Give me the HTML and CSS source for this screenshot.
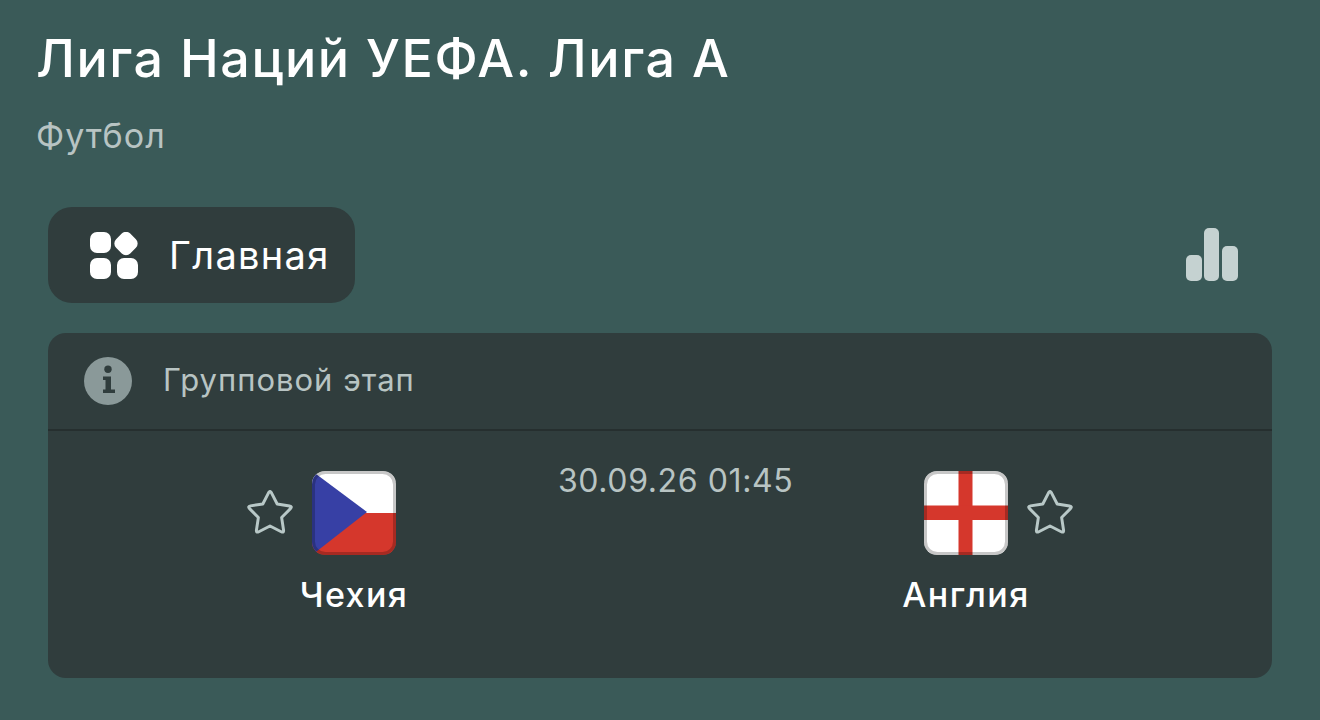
FILE: index.html
```html
<!DOCTYPE html>
<html lang="ru">
<head>
    <meta charset="UTF-8">
    <title>Лига Наций УЕФА. Лига А</title>
    <link rel="stylesheet" href="styles.css">
</head>
<body>
    <header class="header">
        <h1>Лига Наций УЕФА. Лига А</h1>
        <div class="sport">Футбол</div>
    </header>

    <div class="content">
        <div class="tabs">
            <div class="tab">
                <svg class="tab-icon" width="48" height="47" viewBox="0 0 48 47">
                    <rect x="0" y="0" width="21" height="21" rx="7" fill="#fff"/>
                    <rect x="26" y="1.500" width="20" height="20" rx="6" fill="#fff" transform="rotate(45 36 11.500)"/>
                    <rect x="0" y="26" width="21" height="21" rx="7" fill="#fff"/>
                    <rect x="27" y="26" width="21" height="21" rx="7" fill="#fff"/>
                </svg>
                <span>Главная</span>
            </div>
            <svg class="stats-icon" width="52" height="53" viewBox="0 0 52 53">
                <rect x="0" y="27" width="16" height="26" rx="5" fill="#c5d2d1"/>
                <rect x="18" y="0" width="15" height="53" rx="5" fill="#c5d2d1"/>
                <rect x="36" y="18" width="16" height="35" rx="5" fill="#c5d2d1"/>
            </svg>
        </div>

        <section class="card">
            <div class="card-head">
                <svg width="48" height="48" viewBox="0 0 48 48">
                    <circle cx="24" cy="24" r="24" fill="#8a9999"/>
                    <circle cx="24" cy="12.300" r="3.700" fill="#303d3d"/>
                    <path d="M19 19.500h8v13h4v3.500h-12v-3.500h2.500v-9.500h-2.500z" fill="#303d3d"/>
                </svg>
                <span class="stage">Групповой этап</span>
            </div>
            <div class="match">
                <div class="team">
                    <div class="team-top">
                        <svg class="star star-left" width="48" height="46" viewBox="1.300 2 45.400 43.400">
                            <path d="M22.600 4.600Q24 2 25.400 4.600L30.800 15.200L42.500 17Q45.400 17.500 43.300 19.600L35 28L36.800 39.800Q37.200 42.700 34.600 41.400L24 36L13.400 41.400Q10.800 42.700 11.200 39.800L13 28L4.700 19.600Q2.600 17.500 5.500 17L17.200 15.200Z" fill="none" stroke="#b8c8c7" stroke-width="2.800" stroke-linejoin="round"/>
                        </svg>
                        <svg class="flag" width="84" height="84" viewBox="0 0 84 84">
                            <defs><clipPath id="cz"><rect width="84" height="84" rx="13"/></clipPath></defs>
                            <g clip-path="url(#cz)">
                                <rect width="84" height="42" fill="#fff"/>
                                <rect y="42" width="84" height="42" fill="#d5372c"/>
                                <path d="M0 0L55 41L0 84z" fill="#3740a5"/>
                            </g>
                            <rect x="1.500" y="1.500" width="81" height="81" rx="12" fill="none" stroke="#000" stroke-opacity=".22" stroke-width="3"/>
                        </svg>
                    </div>
                    <div class="team-name">Чехия</div>
                </div>
                <div class="match-time">30.09.26 01:45</div>
                <div class="team team-right">
                    <div class="team-top">
                        <span></span>
                        <svg class="flag" width="84" height="84" viewBox="0 0 84 84">
                            <defs><clipPath id="en"><rect width="84" height="84" rx="13"/></clipPath></defs>
                            <g clip-path="url(#en)">
                                <rect width="84" height="84" fill="#fff"/>
                                <rect x="34.500" width="14" height="84" fill="#d5372c"/>
                                <rect y="34.500" width="84" height="14.500" fill="#d5372c"/>
                            </g>
                            <rect x="1.500" y="1.500" width="81" height="81" rx="12" fill="none" stroke="#000" stroke-opacity=".22" stroke-width="3"/>
                        </svg>
                        <svg class="star star-right" width="48" height="46" viewBox="1.300 2 45.400 43.400">
                            <path d="M22.600 4.600Q24 2 25.400 4.600L30.800 15.200L42.500 17Q45.400 17.500 43.300 19.600L35 28L36.800 39.800Q37.200 42.700 34.600 41.400L24 36L13.400 41.400Q10.800 42.700 11.200 39.800L13 28L4.700 19.600Q2.600 17.500 5.500 17L17.200 15.200Z" fill="none" stroke="#b8c8c7" stroke-width="2.800" stroke-linejoin="round"/>
                        </svg>
                    </div>
                    <div class="team-name">Англия</div>
                </div>
            </div>
        </section>
    </div>
</body>
</html>
```

FILE: styles.css
```css
html, body {
    height: 100%;
}
body {
    margin: 0;
    overflow: hidden;
    background-color: #3a5a58;
    font-family: Inter, "Noto Sans", sans-serif;
    color: #fff;
}
.header {
    padding: 28px 36px 0;
}
h1 {
    margin: 0;
    font-size: 52px;
    line-height: 62px;
    font-weight: 500;
    letter-spacing: 1.55px;
}
.sport {
    margin-top: 27px;
    font-size: 34px;
    line-height: 38px;
    letter-spacing: 1px;
    color: #b8c4c3;
}
.content {
    padding: 52px 48px 0;
}
.tabs {
    display: flex;
    justify-content: space-between;
    align-items: center;
    height: 96px;
    padding-right: 34px;
}
.tab {
    display: flex;
    align-items: center;
    gap: 31px;
    height: 96px;
    box-sizing: border-box;
    padding: 0 25px 0 42px;
    background-color: #303d3d;
    border-radius: 24px;
    font-size: 38px;
    letter-spacing: 1.3px;
}
.stats-icon {
    margin-bottom: 1px;
}
.card {
    margin-top: 30px;
    height: 345px;
    background-color: #303d3d;
    border-radius: 18px;
}
.card-head {
    display: flex;
    align-items: center;
    gap: 31px;
    height: 96px;
    padding-left: 36px;
    border-bottom: 2px solid #262f2f;
    font-size: 31px;
    letter-spacing: 1px;
    color: #b8c4c3;
}
.stage {
    margin-bottom: 3px;
}
.match {
    display: flex;
    align-items: flex-start;
    padding: 23px 0 0 176px;
}
.team {
    width: 260px;
    flex: none;
    text-align: center;
}
.team-right {
    margin-left: 44px;
}
.team-top {
    display: grid;
    grid-template-columns: 1fr 84px 1fr;
    align-items: center;
    margin-top: 17px;
}
.flag {
    display: block;
}
.star-left {
    justify-self: end;
    margin-right: 18px;
}
.star-right {
    margin-left: 18px;
}
.team-name {
    margin-top: 20px;
    font-size: 34px;
    line-height: 40px;
    font-weight: 500;
    letter-spacing: 1.4px;
}
.match-time {
    flex: none;
    width: 234px;
    margin-left: 74px;
    font-size: 32px;
    line-height: 53px;
    letter-spacing: .6px;
    white-space: nowrap;
    color: #b8c4c3;
}
```
